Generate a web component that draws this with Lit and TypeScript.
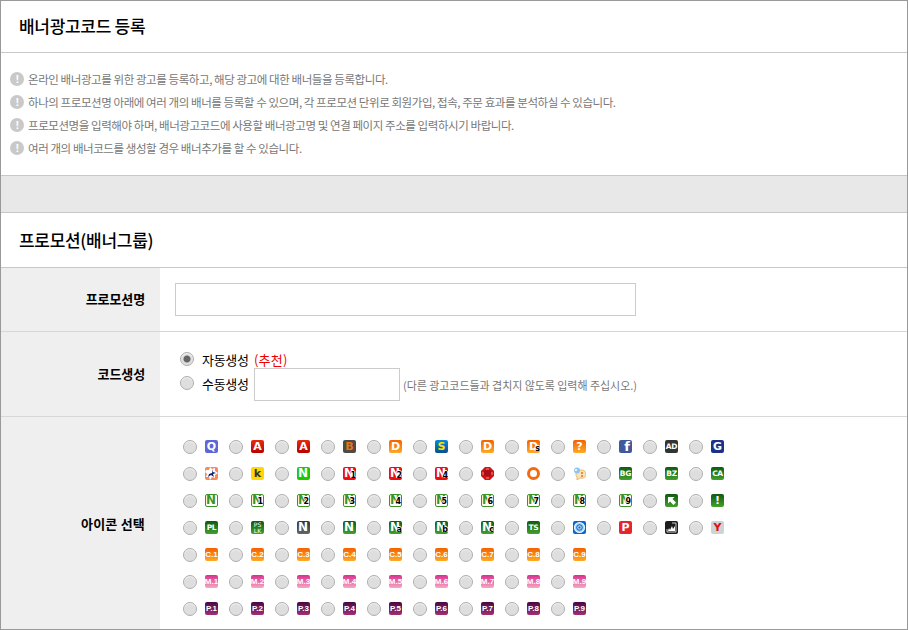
import { LitElement, html, css, svg } from "lit";
import { customElement } from "lit/decorators.js";

type Ic = { t?: string; s?: string; c: string; g?: string };

const n = (c: string, s?: string): Ic => ({ t: "N", s, c: `${c} nn` });
const rows: Ic[][] = [
  [
    { t: "Q", c: "q" }, { t: "A", c: "red" }, { t: "A", c: "red" }, { t: "B", c: "brown" },
    { t: "D", c: "orange" }, { t: "S", c: "blue" }, { t: "D", c: "orange" }, { t: "D", s: "s", c: "orange" },
    { t: "?", c: "orange" }, { t: "f", c: "fb" }, { t: "AD", c: "dark tiny" }, { t: "G", c: "navy" },
  ],
  [
    { g: "star", c: "peach" }, { t: "k", c: "yellow" }, n("lime"), n("nred", "1"), n("nred", "2"), n("nred", "4"),
    { g: "gem", c: "none" }, { g: "ring", c: "none" }, { g: "bubble", c: "none" },
    { t: "BG", c: "green tiny" }, { t: "BZ", c: "green tiny" }, { t: "CA", c: "green tiny" },
  ],
  [
    n("frame"), n("frame", "1"), n("frame", "2"), n("frame", "3"), n("frame", "4"), n("frame", "5"),
    n("frame", "6"), n("frame", "7"), n("frame", "8"), n("frame", "9"),
    { g: "arrow", c: "green" }, { t: "!", c: "green" },
  ],
  [
    { t: "PL", c: "green tiny" }, { t: "PS LK", c: "green two" }, n("gray"), n("green"),
    n("green", "a"), n("green", "b"), n("green", "c"), { t: "TS", c: "green tiny" },
    { g: "target", c: "azure" }, { t: "P", c: "crimson" }, { g: "chart", c: "black" }, { t: "Y", c: "silver" },
  ],
  Array.from({ length: 9 }, (_, i) => ({ t: `C.${i + 1}`, c: "orange tiny lab" })),
  Array.from({ length: 9 }, (_, i) => ({ t: `M.${i + 1}`, c: "pink tiny lab" })),
  Array.from({ length: 9 }, (_, i) => ({ t: `P.${i + 1}`, c: "plum tiny lab" })),
];

const glyphs: Record<string, unknown> = {
  star: svg`<svg viewBox="0 0 13 13" width="13" height="13"><path d="M1 3l3 0 1-3 2 2 3-1 0 3 3 2-3 2 0 3-3-1-2 3-1-3-3 0 1-3-2-2z" fill="#fff"/><path d="M8 2l0 3 3 1-3 1 1 3-3-2-3 2 1-3 3-1z" fill="#14206a"/></svg>`,
  gem: svg`<svg viewBox="0 0 13 13" width="13" height="13"><path d="M4 0h5l4 4v5l-4 4H4L0 9V4z" fill="#c8141a"/><path d="M4 3h5l2 3-2 3H4L2 6z" fill="#a80e14"/><path d="M5 1h3v2H5zM1 5h2v3H1zM10 5h2v3h-2zM5 10h3v2H5z" fill="#e94c44"/></svg>`,
  ring: svg`<svg viewBox="0 0 13 13" width="13" height="13"><circle cx="6.5" cy="6.5" r="5" fill="#fff" stroke="#f26a14" stroke-width="3"/></svg>`,
  bubble: svg`<svg viewBox="0 0 13 13" width="13" height="13"><path d="M5 4c3-2 8-1 8 3 0 3-3 5-6 4l-3 2 0-3C2 8 3 5 5 4z" fill="#fbe3b4" stroke="#e0a050" stroke-width=".7"/><circle cx="4" cy="3.5" r="3" fill="#8ec5ee"/><circle cx="3" cy="3" r="1" fill="#fff"/><circle cx="9" cy="6" r="1" fill="#d9762a"/><circle cx="9" cy="9" r="1" fill="#d9762a"/></svg>`,
  arrow: svg`<svg viewBox="0 0 13 13" width="13" height="13"><path d="M3 3h6.5L7.5 5l3.5 3.5L8.5 11 5 7.5 3 9.5z" fill="#fff"/></svg>`,
  target: svg`<svg viewBox="0 0 13 13" width="13" height="13"><circle cx="6.5" cy="6.5" r="5" fill="#9fd0f5" stroke="#e6f3ff" stroke-width="1.2"/><circle cx="6.5" cy="6.5" r="2.8" fill="none" stroke="#0b63c4" stroke-width="1"/><circle cx="6.5" cy="6.5" r="1" fill="#0b63c4"/></svg>`,
  chart: svg`<svg viewBox="0 0 13 13" width="13" height="13"><path d="M2 8V11H11V2H7" fill="none" stroke="#ccc" stroke-width="1"/><path d="M3 10l1-3 1 2 2-4 1 3 2-3v5z" fill="#fff"/></svg>`,
};

@customElement("app-root")
export class AppRoot extends LitElement {
  static styles = css`
    :host {
      display: block;
      box-sizing: border-box;
      width: 908px;
      height: 630px;
      overflow: hidden;
      border: 1px solid #999;
      background: #fff;
      font-family: "Noto Sans CJK KR", "Noto Sans", sans-serif;
      color: #000;
    }
    h2 {
      margin: 0;
      box-sizing: border-box;
      font-size: 17px;
      font-weight: 500;
      padding-left: 18px;
      display: flex;
      align-items: center;
      letter-spacing: -0.3px;
    }
    .top-title {
      height: 52px;
      padding-bottom: 3px;
      border-bottom: 1px solid #c8c8c8;
    }
    .info {
      height: 123px;
      box-sizing: border-box;
      margin: 0;
      padding: 14px 0 0 9px;
      list-style: none;
      font-size: 11.5px;
      color: #777;
      border-bottom: 1px solid #c8c8c8;
    }
    .info li {
      height: 23px;
      display: flex;
      align-items: center;
      gap: 4px;
      letter-spacing: -0.43px;
      white-space: nowrap;
    }
    .mark {
      flex: none;
      width: 14px;
      height: 14px;
      border-radius: 50%;
      background: #c9c9c9;
      color: #fff;
      font: bold 11px/14px "Liberation Sans", sans-serif;
      text-align: center;
    }
    .band {
      height: 36px;
      background: #e8e8e8;
      border-bottom: 1px solid #c8c8c8;
    }
    .sec-title {
      height: 55px;
      padding-bottom: 2px;
      border-bottom: 1px solid #c8c8c8;
    }
    .row {
      display: flex;
      border-bottom: 1px solid #d8d8d8;
    }
    .row:last-child {
      border-bottom: none;
    }
    .th {
      flex: none;
      width: 159px;
      box-sizing: border-box;
      background: #efefef;
      display: flex;
      align-items: center;
      justify-content: flex-end;
      padding: 0 15px 2px 0;
      font-size: 13px;
      font-weight: 700;
      letter-spacing: -0.1px;
      white-space: nowrap;
    }
    .r-icons .th {
      padding-bottom: 0;
      letter-spacing: 0.2px;
    }
    .td {
      flex: 1;
      min-width: 0;
    }
    .r-name {
      height: 63px;
    }
    .r-name .td {
      padding: 15px 0 0 15px;
    }
    input[type="text"] {
      display: block;
      box-sizing: border-box;
      margin: 0;
      border: 1px solid #ccc;
      background: #fff;
      padding: 0;
    }
    .wide {
      width: 461px;
      height: 33px;
    }
    .short {
      width: 146px;
      height: 33px;
    }
    .r-code {
      height: 84px;
    }
    .r-code .td {
      padding: 20px 0 0 20px;
      font-size: 13px;
      letter-spacing: -0.3px;
    }
    .line {
      display: flex;
      align-items: center;
      white-space: nowrap;
    }
    .l1 {
      height: 14px;
    }
    .l2 {
      margin-top: 2px;
      height: 33px;
    }
    .l2 .radio {
      margin-top: -4px;
    }
    .l2 .lbl {
      margin-top: -3px;
    }
    .lbl {
      margin-left: 8px;
      width: 52px;
    }
    .rec {
      color: #e00;
      letter-spacing: 0.2px;
    }
    .hint {
      margin: 0 0 -1px 3px;
      font-size: 11px;
      color: #777;
      letter-spacing: -0.05px;
    }
    .radio {
      appearance: none;
      flex: none;
      box-sizing: border-box;
      width: 14px;
      height: 14px;
      margin: 0;
      border-radius: 50%;
      border: 1px solid #aeaeae;
      background: #dedede;
      box-shadow: inset 0 1px 1px #f4f4f4;
    }
    .radio:checked {
      background: radial-gradient(circle, #666 0 3px, #dedede 4px);
    }
    .r-icons {
      height: 212px;
    }
    .r-icons .td {
      padding: 23px 0 0 23px;
      display: flex;
      flex-direction: column;
      gap: 13px;
    }
    .ir {
      display: flex;
      height: 14px;
    }
    .cell {
      width: 46px;
      display: flex;
      gap: 8px;
    }
    .ic {
      position: relative;
      flex: none;
      width: 13px;
      height: 13px;
      box-sizing: border-box;
      border-radius: 2px;
      overflow: hidden;
      display: flex;
      align-items: center;
      justify-content: center;
      font: bold 11px/13px "DejaVu Sans", sans-serif;
      color: #fff;
    }
    .ic svg {
      position: absolute;
      left: 0;
      top: 0;
    }
    .nn {
      font-size: 12px;
      justify-content: flex-start;
      padding-left: 1px;
    }
    .sub {
      position: absolute;
      right: 0;
      bottom: 0;
      font: bold 8px/8px "DejaVu Sans", sans-serif;
      color: #000;
      text-shadow: 1px 0 #fff, -1px 0 #fff, 0 -1px #fff;
    }
    .ic.tiny {
      font: bold 7.5px/13px "DejaVu Sans", sans-serif;
      letter-spacing: -0.3px;
      white-space: nowrap;
    }
    .ic.lab {
      font: bold 8px/13px "Liberation Sans", sans-serif;
      letter-spacing: 0;
    }
    .ic.two {
      font: 6px/6px "DejaVu Sans", sans-serif;
      text-align: center;
    }
    .red {
      background: linear-gradient(#e62a10, #b80000);
    }
    .orange {
      background: linear-gradient(#f26200, #ffa928);
    }
    .pink {
      background: linear-gradient(#d92f8e, #f6a8c2);
    }
    .plum {
      background: linear-gradient(#470842, #a22f70);
    }
    .green {
      background: linear-gradient(#0e5a10, #44a02c);
    }
    .q {
      background: #5b66d8;
    }
    .brown {
      background: #4e4a44;
      color: #e87414;
    }
    .blue {
      background: linear-gradient(#0a8ad8, #07508c);
      color: #ffe000;
    }
    .ic.fb {
      background: #3f5a9c;
      justify-content: flex-end;
      padding-right: 2px;
      font-size: 13px;
    }
    .dark {
      background: #333;
    }
    .navy {
      background: #1c3288;
    }
    .peach {
      background: #f6885a;
    }
    .yellow {
      background: #ffd800;
      color: #333;
    }
    .lime {
      background: #1ec800;
    }
    .nred {
      background: #ef0d0d;
    }
    .none {
      background: none;
    }
    .frame {
      background: #fff;
      border: 1px solid #3d9424;
      color: #3d9424;
      padding-left: 0;
    }
    .gray {
      background: linear-gradient(#333, #666);
    }
    .azure {
      background: #0a66c8;
    }
    .crimson {
      background: #e8242e;
    }
    .black {
      background: #1c1c1c;
    }
    .silver {
      background: #ccd4d4;
      color: #e01010;
    }
  `;

  private icon(i: Ic) {
    return html`<span class="ic ${i.c}">${i.g ? glyphs[i.g] : i.t}${i.s
      ? html`<span class="sub">${i.s}</span>`
      : ""}</span>`;
  }

  render() {
    const notes = [
      "온라인 배너광고를 위한 광고를 등록하고, 해당 광고에 대한 배너들을 등록합니다.",
      "하나의 프로모션명 아래에 여러 개의 배너를 등록할 수 있으며, 각 프로모션 단위로 회원가입, 접속, 주문 효과를 분석하실 수 있습니다.",
      "프로모션명을 입력해야 하며, 배너광고코드에 사용할 배너광고명 및 연결 페이지 주소를 입력하시기 바랍니다.",
      "여러 개의 배너코드를 생성할 경우 배너추가를 할 수 있습니다.",
    ];
    return html`
      <h2 class="top-title">배너광고코드 등록</h2>
      <ul class="info">
        ${notes.map((t) => html`<li><span class="mark">!</span>${t}</li>`)}
      </ul>
      <div class="band"></div>
      <h2 class="sec-title">프로모션(배너그룹)</h2>
      <div class="row r-name">
        <div class="th">프로모션명</div>
        <div class="td"><input type="text" class="wide" /></div>
      </div>
      <div class="row r-code">
        <div class="th">코드생성</div>
        <div class="td">
          <div class="line l1">
            <input class="radio" type="radio" name="code" checked />
            <span class="lbl">자동생성</span>
            <span class="rec">(추천)</span>
          </div>
          <div class="line l2">
            <input class="radio" type="radio" name="code" />
            <span class="lbl">수동생성</span>
            <input type="text" class="short" />
            <span class="hint">(다른 광고코드들과 겹치지 않도록 입력해 주십시오.)</span>
          </div>
        </div>
      </div>
      <div class="row r-icons">
        <div class="th">아이콘 선택</div>
        <div class="td">
          ${rows.map(
            (r, y) => html`<div class="ir">
              ${r.map(
                (i, x) => html`<div class="cell">
                  <input class="radio" type="radio" name="icon" aria-label="${y}-${x}" />
                  ${this.icon(i)}
                </div>`
              )}
            </div>`
          )}
        </div>
      </div>
    `;
  }
}
